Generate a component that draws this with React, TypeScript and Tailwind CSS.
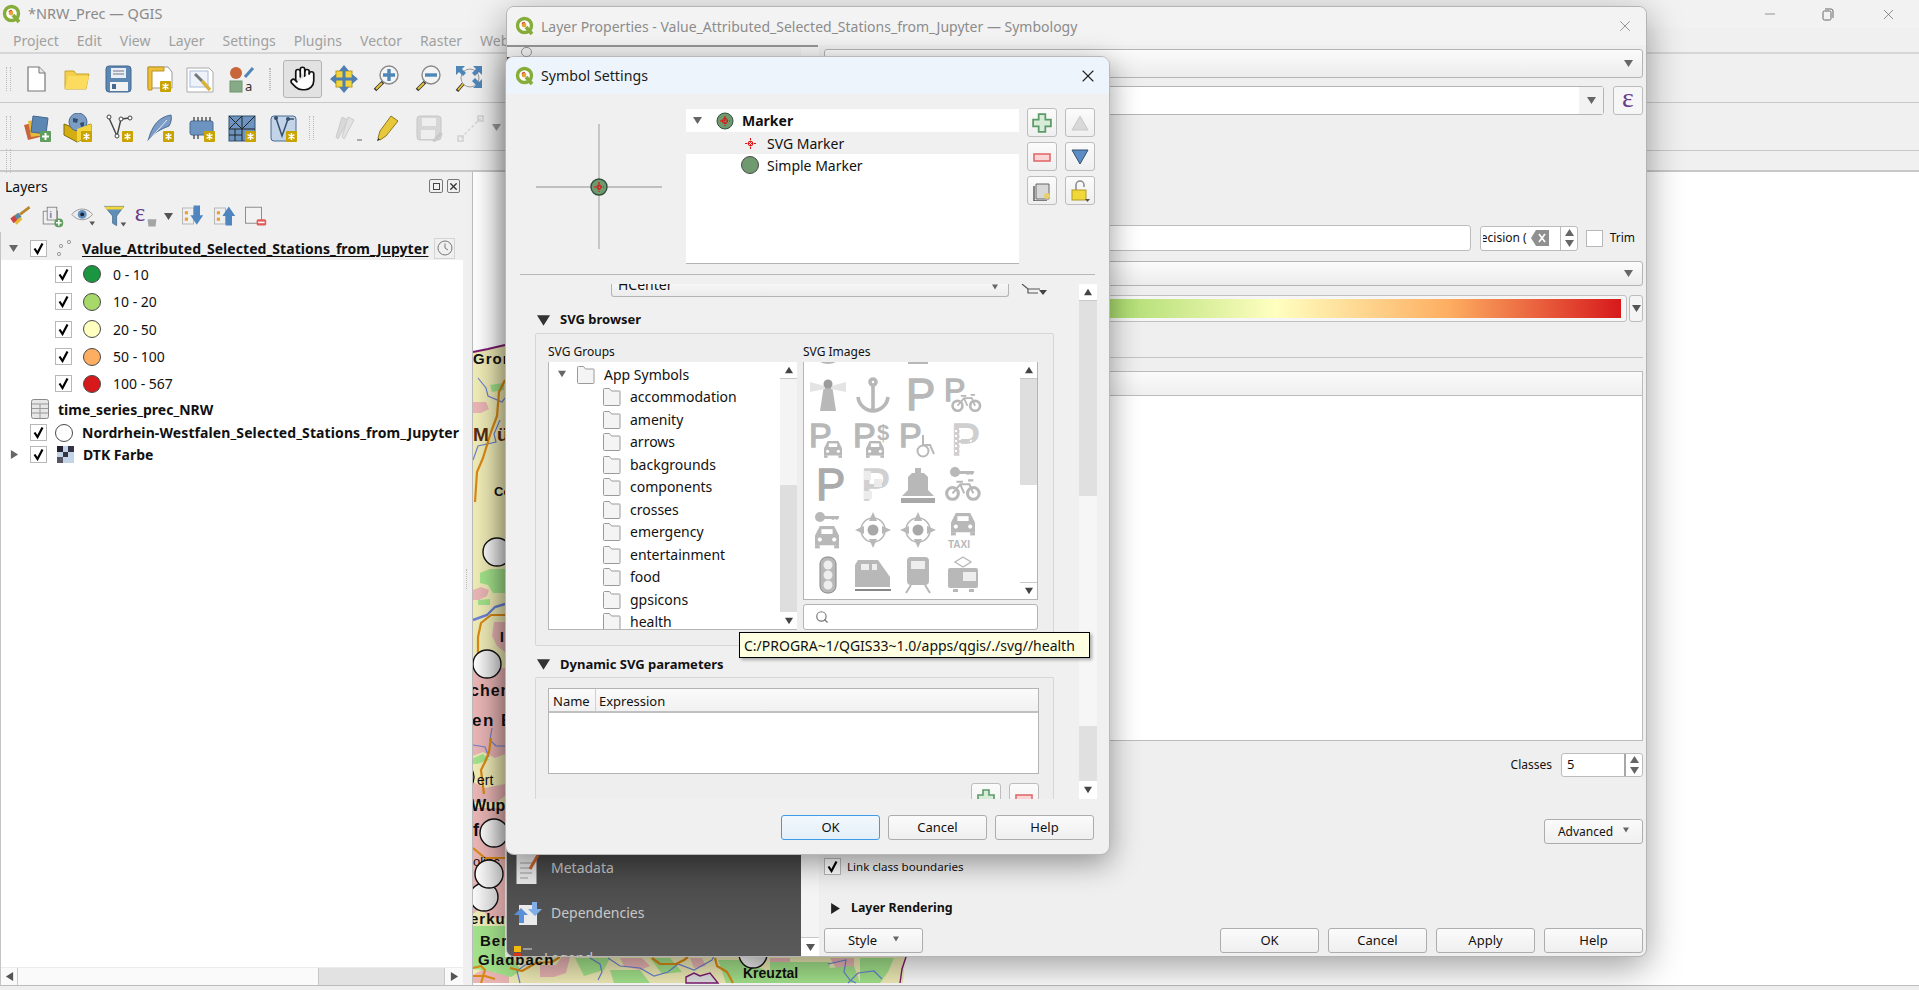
import React from "react";
import { Hand, X, Minus, Search } from "lucide-react";

const ink = "#b8b8b8";

const Tri: React.FC<{ dir?: "up" | "down" | "left" | "right"; size?: number; color?: string }> = ({
  dir = "down",
  size = 9,
  color = "#555",
}) => {
  const pts = { up: "0,9 5,1 10,9", down: "0,1 10,1 5,9", left: "9,0 9,10 1,5", right: "1,0 1,10 9,5" }[dir];
  return (
    <svg width={size} height={size} viewBox="0 0 10 10" className="shrink-0">
      <polygon points={pts} fill={color} />
    </svg>
  );
};

const Logo: React.FC<{ size?: number; faded?: boolean }> = ({ size = 20, faded }) => (
  <svg width={size} height={size} viewBox="0 0 20 20" className={faded ? "shrink-0 opacity-80" : "shrink-0"}>
    <circle cx="9.5" cy="9.5" r="7" fill="#fff" stroke="#86ac3a" strokeWidth="3.4" />
    <path d="M11 11 L17 18" stroke="#86ac3a" strokeWidth="3.6" />
    <circle cx="9" cy="9" r="2.4" fill="#e8a23c" />
    <path d="M7 8 a2.5 2.5 0 0 1 3-1.5" stroke="#d8533a" strokeWidth="1.2" fill="none" />
  </svg>
);

const Badge: React.FC<{ x: number; y: number }> = ({ x, y }) => (
  <g transform={`translate(${x} ${y})`}>
    <rect width="11" height="11" rx="1" fill="#c9a400" />
    <path d="M5.5 2v7M2.5 3.5l6 4M8.5 3.5l-6 4" stroke="#fff" strokeWidth="1.5" />
  </g>
);

const Ic: React.FC<{ children: React.ReactNode; size?: number; className?: string }> = ({ children, size = 30, className }) => (
  <svg width={size} height={size} viewBox="0 0 30 30" className={className ?? "shrink-0"}>
    {children}
  </svg>
);

const Magnifier: React.FC<{ sign: "+" | "-" }> = ({ sign }) => (
  <Ic>
    <path d="M12 18 L4 26" stroke="#333" strokeWidth="3.6" />
    <path d="M11 19 L5 25" stroke="#e8c33a" strokeWidth="2" />
    <circle cx="18" cy="11" r="9" fill="#f4f4f4" stroke="#8a8a8a" strokeWidth="1.4" />
    <path d={sign === "+" ? "M18 5v12M12 11h12" : "M12 11h12"} stroke="#4f86b8" strokeWidth="3.4" />
  </Ic>
);

const toolbar1 = [
  <Ic key="new"><path d="M7 3h11l6 6v18H7z" fill="#fff" stroke="#777" strokeWidth="1.2" /><path d="M18 3v6h6" fill="#e8e8e8" stroke="#777" /></Ic>,
  <Ic key="open"><path d="M3 7h9l2 3h13l-3 15H3z" fill="#f3cf4b" stroke="#c9a52c" /><path d="M6 12h21l-3 13H3z" fill="#fcdc5e" /></Ic>,
  <Ic key="save"><rect x="3" y="2" width="25" height="26" rx="3" fill="#5d87b3" stroke="#44688f" /><rect x="8" y="4" width="15" height="10" fill="#e8eef4" /><path d="M10 7h11M10 10h11" stroke="#778" /><rect x="7" y="18" width="18" height="9" fill="#f2f2f2" /><rect x="9" y="20" width="4" height="5" fill="#44688f" /></Ic>,
  <Ic key="layout"><path d="M4 3h20l4 5v16H4z" fill="#fff" stroke="#999" /><path d="M4 3h16v4H8v19H4z" fill="#eebf3a" stroke="#b99420" /><Badge x="16" y="17" /></Ic>,
  <Ic key="style"><path d="M2 4h22l4 4v20H2z" fill="#fff" stroke="#aaa" /><rect x="5" y="7" width="18" height="16" fill="#eef3fb" stroke="#a9bcd8" /><path d="M10 10l4 4 3 3" stroke="#777" strokeWidth="3" /><path d="M17 17l8 9" stroke="#d8b13a" strokeWidth="3.4" /></Ic>,
  <Ic key="styleA"><circle cx="10" cy="9" r="6" fill="#c8653a" /><path d="M19 13 L27 4" stroke="#4f86b8" strokeWidth="3" /><rect x="4" y="17" width="12" height="11" fill="#86ab86" stroke="#6f946f" /><text x="19" y="27" fontSize="13" fill="#333" fontFamily="Noto Sans">a</text></Ic>,
];

const Pan = () => (
  <Ic>
    <rect x="7" y="7" width="16" height="16" fill="#f2d43d" stroke="#b99b20" />
    <path d="M15 1l5 6h-10zM15 29l5-6h-10zM1 15l6-5v10zM29 15l-6-5v10z" fill="#4f7fb0" />
    <path d="M15 6v18M6 15h18" stroke="#4f7fb0" strokeWidth="3" />
  </Ic>
);

const ZoomFull = () => (
  <Ic>
    <circle cx="16" cy="14" r="9" fill="#ececec" stroke="#999" />
    <path d="M2 2h9l-3 3 4 4-3 3-4-4-3 3zM28 2h-9l3 3-4 4 3 3 4-4 3 3zM28 24h-9l3-3-4-4 3-3 4 4 3-3z" fill="#4f86b8" />
    <path d="M9 20L3 27" stroke="#333" strokeWidth="3.4" />
    <path d="M9 20L4 26" stroke="#e8c33a" strokeWidth="1.8" />
  </Ic>
);

const toolbar2 = [
  <Ic key="add"><path d="M2 12l12-3 4 15-12 3z" fill="#c8653a" /><path d="M6 8l13-2 3 16-13 2z" fill="#e8b93a" /><path d="M11 3l15 2-2 16-15-2z" fill="#5d87b3" stroke="#44688f" /><rect x="18" y="18" width="11" height="11" rx="1" fill="#5f9e5f" /><path d="M23.5 20v7M20 23.5h7" stroke="#fff" strokeWidth="2" /></Ic>,
  <Ic key="gpkg"><path d="M1 11l13 5 14-5v11l-14 7-13-7z" fill="#d4ae10" stroke="#7d6b12" /><circle cx="15" cy="9" r="9" fill="#7d9cc4" stroke="#4a6a94" /><path d="M10 5l5 1-1 4-4-1zM17 10l4-1 0 4-3 1z" fill="#33506f" /><path d="M14 16l14-5v11l-14 7z" fill="#f2d43d" /><Badge x="18" y="18" /></Ic>,
  <Ic key="vec"><path d="M5 5l8 18 4-17 9-1" fill="none" stroke="#444" strokeWidth="1.4" /><circle cx="5" cy="4" r="2" fill="#fff" stroke="#444" /><circle cx="13" cy="23" r="2" fill="#fff" stroke="#444" /><circle cx="17" cy="6" r="2" fill="#fff" stroke="#444" /><circle cx="26" cy="5" r="2" fill="#fff" stroke="#444" /><Badge x="18" y="18" /></Ic>,
  <Ic key="feather"><path d="M26 2C14 4 7 12 3 28 8 20 16 16 24 13 26 10 27 5 26 2z" fill="#7a9cc6" stroke="#4a6a94" /><path d="M3 28L22 7" stroke="#e8eef4" /><Badge x="18" y="18" /></Ic>,
  <Ic key="chip"><rect x="4" y="8" width="23" height="14" rx="2" fill="#6d94c0" stroke="#4a6a94" /><path d="M8 4v4M12 4v4M16 4v4M20 4v4M24 4v4M8 22v4M12 22v4" stroke="#333" strokeWidth="1.2" /><Badge x="18" y="18" /></Ic>,
  <Ic key="mesh"><rect x="2" y="3" width="26" height="25" fill="#6d94c0" stroke="#33506f" /><path d="M2 3l13 13M15 3L2 16M2 16h26M15 3v25M2 22h13M8 16v12M15 16L28 3" stroke="#222" /><Badge x="18" y="18" /></Ic>,
  <Ic key="vt"><rect x="3" y="3" width="25" height="25" rx="3" fill="#c3d3e8" stroke="#4a6a94" /><path d="M8 5l6 18 6-17h6" fill="none" stroke="#33506f" strokeWidth="1.5" /><circle cx="8" cy="5" r="2" fill="#33506f" /><circle cx="20" cy="6" r="2" fill="#33506f" /><Badge x="18" y="18" /></Ic>,
];

const toolbar2b = [
  <Ic key="pens"><path d="M6 26l-2-2 6-20 6 3z" fill="#d8d8d8" stroke="#ccc" /><path d="M12 26l-2-2 6-20 6 3z" fill="#e2e2e2" stroke="#ccc" /><path d="M25 27h5" stroke="#aaa" strokeWidth="2" /></Ic>,
  <Ic key="pen"><path d="M7 27l-2-2 2-7L18 3l7 5L13 23z" fill="#e8c83a" stroke="#8a7a20" /><path d="M5 25l2 2-3 1z" fill="#333" /></Ic>,
  <Ic key="saveg"><rect x="3" y="3" width="24" height="24" rx="3" fill="#d6d6d6" stroke="#c6c6c6" /><rect x="8" y="5" width="14" height="8" fill="#eee" /><rect x="7" y="17" width="14" height="9" fill="#eee" /><path d="M18 28l8-9 3 2-8 8z" fill="#c8c8c8" /></Ic>,
  <Ic key="line"><path d="M6 25L26 5" stroke="#d4d4d4" strokeDasharray="3 2" strokeWidth="1.4" /><rect x="3" y="23" width="5" height="5" fill="none" stroke="#d0d0d0" strokeWidth="1.5" /><rect x="23" y="3" width="5" height="5" fill="none" stroke="#d0d0d0" strokeWidth="1.5" /></Ic>,
];

const layerTools = [
  <Ic key="brush" size={24}><path d="M3 18l9-7 6 8-7 7z" fill="#e8b93a" /><path d="M3 18l5-4 4 5-5 5z" fill="#c44" /><path d="M8 15l5-4 4 5-6 3z" fill="#58a" /><path d="M15 13l12-9" stroke="#b8862e" strokeWidth="3.4" /></Ic>,
  <Ic key="group" size={24}><rect x="4" y="9" width="18" height="16" fill="#f0f0f0" stroke="#777" /><rect x="9" y="4" width="12" height="16" fill="#eee" stroke="#777" /><text x="12" y="17" fontSize="10" fontWeight="700" fill="#4f7fb0">i</text><rect x="18" y="18" width="11" height="11" rx="5" fill="#5f9e5f" /><path d="M23.5 20v7M20 23.5h7" stroke="#fff" strokeWidth="2" /></Ic>,
  <Ic key="eye" size={24}><path d="M1 13c7-9 19-9 26 0-7 9-19 9-26 0z" fill="#ececec" stroke="#888" /><circle cx="14" cy="13" r="5.5" fill="#5f8fc0" /><circle cx="14" cy="13" r="2.4" fill="#223" /><polygon points="23,22 30,22 26.5,27" fill="#555" /></Ic>,
  <Ic key="filter" size={24}><path d="M2 3h24l-9 12v12l-5-3v-9z" fill="#5f8fb8" stroke="#44688f" /><path d="M2 3h24l-2 4H4z" fill="#f2d43d" /><polygon points="22,23 29,23 25.5,28" fill="#555" /></Ic>,
  <Ic key="expr" size={24}><text x="1" y="21" fontSize="31" fill="#6a3d8a" fontFamily="Liberation Serif">ε</text><path d="M17 19h11l-1 9h-9z" fill="#a5a5a5" /></Ic>,
  <Ic key="exp" size={24}><rect x="3" y="5" width="14" height="20" fill="#f0f0f0" stroke="#aaa" /><rect x="6" y="9" width="4" height="4" fill="#e8a23c" /><rect x="6" y="17" width="4" height="4" fill="#e8a23c" /><path d="M17 2h8v12h4L21 26 13 14h4z" fill="#4f86c0" /></Ic>,
  <Ic key="col" size={24}><rect x="3" y="5" width="14" height="20" fill="#f0f0f0" stroke="#aaa" /><rect x="6" y="9" width="4" height="4" fill="#e8a23c" /><rect x="6" y="17" width="4" height="4" fill="#e8a23c" /><path d="M17 27h8V15h4L21 3 13 15h4z" fill="#4f86c0" /></Ic>,
  <Ic key="rem" size={24}><rect x="3" y="4" width="20" height="20" fill="#f2f2f2" stroke="#777" /><rect x="17" y="19" width="12" height="8" rx="2" fill="#e25b5b" /><path d="M19 23h8" stroke="#fff" strokeWidth="2" /></Ic>,
];

const Check: React.FC<{ checked?: boolean }> = ({ checked = true }) => (
  <span className="w-[17px] h-[17px] shrink-0 bg-white border border-[#b8b8b8] flex items-center justify-center">
    {checked && (
      <svg width="13" height="13" viewBox="0 0 13 13">
        <path d="M2.5 6.5 L5.5 11 L10.5 1.5" fill="none" stroke="#000" strokeWidth="2.2" />
      </svg>
    )}
  </span>
);

const Dot: React.FC<{ color: string; size?: number }> = ({ color, size = 18 }) => (
  <span className="rounded-full border border-[#4a4a4a] shrink-0 block" style={{ background: color, width: size, height: size }} />
);

const legend = [
  { label: "0 - 10", color: "#1a9641", top: "h-[28px]" },
  { label: "10 - 20", color: "#a6d96a", top: "h-[27px]" },
  { label: "20 - 50", color: "#ffffc0", top: "h-[28px]" },
  { label: "50 - 100", color: "#fdae61", top: "h-[27px]" },
  { label: "100 - 567", color: "#d7191c", top: "h-[27px]" },
];

const LayersPanel = () => (
  <div className="w-[463px] shrink-0 flex flex-col">
    <div className="h-[28px] flex items-center pl-[5px] pr-[2px] text-[14px] text-[#111]">
      <span className="flex-1">Layers</span>
      <span className="w-[14px] h-[14px] border border-[#777] rounded-[2px] mr-[4px] flex items-center justify-center">
        <span className="w-[7px] h-[7px] border border-[#444]" />
      </span>
      <span className="w-[13px] h-[14px] border border-[#777] rounded-[2px] mr-[1px] flex items-center justify-center">
        <X size={11} strokeWidth={3} color="#333" />
      </span>
    </div>
    <div className="h-[32px] flex items-center pl-[8px]">
      {layerTools.map((t, i) => (
        <span key={i} className={i === 4 ? "w-[46px] flex items-center gap-[6px]" : "w-[31.5px]"}>
          {t}
          {i === 4 && <Tri size={9} />}
        </span>
      ))}
    </div>
    <div className="flex-1 bg-white border-l border-[#c4c4c4] flex flex-col min-h-0 text-[14px] text-[#111]">
      <div className="h-[28px] bg-[#f0f0f0] flex items-center pl-[8px] pt-[4px]">
        <Tri size={9} color="#666" />
        <span className="w-[4px]" />
        <span className="ml-[8px]"><Check /></span>
        <svg width="18" height="18" viewBox="0 0 18 18" className="ml-[9px]">
          <circle cx="3" cy="15" r="1.6" fill="none" stroke="#999" />
          <circle cx="5" cy="7" r="1.6" fill="none" stroke="#999" />
          <circle cx="13" cy="3" r="1.6" fill="none" stroke="#999" />
        </svg>
        <span className="ml-[8px] font-bold underline underline-offset-2 whitespace-nowrap tracking-[0.06px]">Value_Attributed_Selected_Stations_from_Jupyter</span>
        <span className="ml-[6px] w-[21px] h-[21px] border border-[#d4d4d4] flex items-center justify-center">
          <svg width="16" height="16" viewBox="0 0 16 16"><circle cx="8" cy="8" r="7" fill="none" stroke="#777" /><path d="M8 3.5V8l3 2" fill="none" stroke="#777" /></svg>
        </span>
      </div>
      {legend.map((l) => (
        <div key={l.label} className={`${l.top} flex items-center pl-[54px]`}>
          <Check />
          <span className="ml-[11px]"><Dot color={l.color} /></span>
          <span className="ml-[12px]">{l.label}</span>
        </div>
      ))}
      <div className="h-[24px] flex items-center pl-[30px]">
        <svg width="18" height="20" viewBox="0 0 18 20">
          <rect x="0.5" y="0.5" width="17" height="19" rx="2" fill="#e6e6e6" stroke="#888" />
          <path d="M1 5h16M1 9.5h16M1 14h16M9 5v14" stroke="#999" />
        </svg>
        <span className="ml-[9px] font-bold">time_series_prec_NRW</span>
      </div>
      <div className="h-[23px] flex items-center pl-[29px]">
        <Check />
        <span className="ml-[8px]"><Dot color="#fff" /></span>
        <span className="ml-[9px] font-bold whitespace-nowrap tracking-[0.1px]">Nordrhein-Westfalen_Selected_Stations_from_Jupyter</span>
      </div>
      <div className="h-[21px] flex items-center pl-[9px]">
        <Tri dir="right" size={9} color="#666" />
        <span className="ml-[11px]"><Check /></span>
        <svg width="17" height="17" viewBox="0 0 3 3" className="ml-[10px]" shapeRendering="crispEdges">
          <rect width="3" height="3" fill="#c4d4e8" />
          <rect width="1" height="1" fill="#223" />
          <rect x="2" width="1" height="1" fill="#334" />
          <rect x="1" y="1" width="1" height="1" fill="#334" />
          <rect y="2" width="1" height="1" fill="#556" />
        </svg>
        <span className="ml-[9px] font-bold">DTK Farbe</span>
      </div>
      <div className="flex-1" />
      <div className="h-[18px] border-t border-[#ececec] bg-[#fafafa] flex items-center">
        <span className="w-[17px] h-full border-r border-[#ccc] flex items-center justify-center"><Tri dir="left" color="#555" /></span>
        <span className="w-[300px]" />
        <span className="w-[127px] h-full bg-[#e2e2e2] border-x border-[#c8c8c8]" />
        <span className="flex-1 flex items-center justify-center"><Tri dir="right" color="#555" /></span>
      </div>
    </div>
  </div>
);

const Stn: React.FC<{ cx: number; cy: number }> = ({ cx, cy }) => (
  <circle cx={cx} cy={cy} r="14" fill="url(#stn)" stroke="#111" strokeWidth="1.4" />
);

const MapCanvas = () => (
  <svg viewBox="472 172 1447 813" width="1447" height="813" className="block bg-white">
    <defs>
      <linearGradient id="stn" x1="0" x2="1">
        <stop offset="0" stopColor="#ffffff" />
        <stop offset="1" stopColor="#dcdcdc" />
      </linearGradient>
    </defs>
    <path d="M473 352 L488 349 L505 345 V957 H905 L903 983 H473 Z" fill="#f1edb8" />
    <path d="M473 352 L488 349 L505 345" fill="none" stroke="#7d1a70" strokeWidth="2" />
    <g fill="#ebb6b6">
      <path d="M473 402 h13 l3 7 -8 4 h-8z" />
      <path d="M473 590 l8 -3 8 3 -2 6 -8 4 h-6z" />
      <path d="M494 622 h11 v30 l-8 -6 -5 -10z" />
      <path d="M473 668 h32 v86 l-10 4 -12 -6 -10 4z" />
      <path d="M473 782 l12 6 20 -4 v12 l-8 6 h-24z" />
      <path d="M473 808 h32 v110 h-16 l-8 -10 -8 6z" />
      <path d="M473 975 l14 -8 8 6 h14 v10 h-36z" />
      <path d="M540 965 h16 l6 -8 8 0 -4 16 -12 4 h-14z" />
      <path d="M620 958 h22 l8 8 -10 4 -16 -4z" />
      <path d="M690 958 h12 l4 8 -12 2z" />
      <path d="M770 958 h20 v4 h-20z" />
      <path d="M830 958 h24 v10 h-18z" />
    </g>
    <g fill="#a4e48c">
      <path d="M490 385 l14 -2 v7 l-12 2z" />
      <path d="M480 573 l10 -4 h15 v24 h-12 l-5 -8 -8 -2z" />
      <path d="M478 600 l12 -1 v6 h-12z" />
      <path d="M473 758 l10 -4 6 6 -12 4 h-4z" />
      <path d="M473 926 h32 v31 h-32z" />
      <path d="M473 957 h40 l8 14 -10 6 -22 -6 -16 -2z" />
      <path d="M575 958 h35 l-6 12 -20 6z" />
      <path d="M610 970 h30 l10 13 h-36z" />
      <path d="M650 958 h20 l12 14 -20 2z" />
      <path d="M718 960 h22 l30 12 v11 h-44z" />
      <path d="M770 962 h60 l-2 21 h-58z" />
      <path d="M828 968 l26 -2 6 17 h-32z" />
      <path d="M860 958 h34 l-6 14 -8 11 h-20z" />
    </g>
    <path d="M686 983 v-6 l8 -4 6 3 10 -3 8 10z" fill="#e2e2e2" stroke="#7d1a70" strokeWidth="1.4" />
    <path d="M906 957 l-4 12 -2 14" fill="none" stroke="#7d1a70" strokeWidth="1.4" />
    <g fill="none" stroke="#6b82d4" strokeWidth="1.2">
      <path d="M478 378 l8 10 2 8 14 6 3 -4" />
      <path d="M500 420 l-6 14 2 8 -18 4 -5 14" />
      <path d="M473 620 l14 -5 8 -8 10 -3" strokeWidth="2.4" />
      <path d="M492 728 l-2 12 6 6 9 0" />
      <path d="M473 745 l12 2 4 10" />
      <path d="M520 983 l-3 -12 8 -6 16 -3" />
      <path d="M590 958 l10 6 2 8 -4 8" />
      <path d="M608 958 l12 8 20 2 14 8 14 -4 10 -8 16 6 18 -10 2 -4" />
      <path d="M828 964 l18 -4 -2 12 6 8 6 3" />
      <path d="M848 983 l10 -10 16 -2 8 8" />
    </g>
    <g fill="none" stroke="#dc8a14" strokeWidth="2.2" strokeLinejoin="round">
      <path d="M505 380 l-6 12 -2 24 -6 16 -8 26 -6 14 -2 30" />
      <path d="M505 615 h-14 l-10 8 -3 14 0 16" />
      <path d="M491 738 l-2 14 -4 10 -4 8 3 24" />
      <path d="M473 848 l12 10 20 0" />
      <path d="M473 968 l8 -2 4 4 -4 13" />
      <path d="M473 976 l12 0 10 3" />
      <path d="M510 968 l12 3 14 -8 16 -1 8 -5" />
      <path d="M652 958 l8 6 16 0 8 -4 4 -3" />
      <path d="M715 958 l2 8 10 6 6 11" />
    </g>
    <g fontFamily="Liberation Sans" fontWeight="700" fill="#111" fontSize="15">
      <text x="473" y="364" letterSpacing="1">Gron</text>
      <text x="473" y="441" fontSize="19" fill="#5a2b10" letterSpacing="1.5">M ü</text>
      <text x="494" y="496" fontSize="13">Co</text>
      <text x="500" y="642" fontSize="14">I</text>
      <text x="470" y="696" fontSize="16" letterSpacing="1">chen</text>
      <text x="472" y="726" fontSize="17" letterSpacing="1.5">en E</text>
      <text x="477" y="785" fontSize="14" fontWeight="400">ert</text>
      <text x="471" y="811" fontSize="16">Wup</text>
      <text x="473" y="836" fontSize="18">f</text>
      <text x="473" y="866" fontSize="13" fontWeight="400">olinc</text>
      <text x="470" y="924" fontSize="15" letterSpacing="1">erkus</text>
      <text x="480" y="946" fontSize="15" letterSpacing="1">Ber</text>
      <text x="478" y="965" fontSize="15" letterSpacing="1">Gladbach</text>
      <text x="743" y="978" fontSize="14">Kreuztal</text>
    </g>
    <Stn cx={497} cy={552} />
    <Stn cx={487} cy={664} />
    <Stn cx={460} cy={777} />
    <Stn cx={494} cy={833} />
    <Stn cx={484} cy={897} />
    <Stn cx={489} cy={874} />
    <Stn cx={753} cy={954} />
    <rect x="472" y="172" width="1" height="813" fill="#bdbdbd" />
  </svg>
);

const QButton: React.FC<{ children: React.ReactNode; className?: string; primary?: boolean }> = ({ children, className, primary }) => (
  <div
    className={`h-[25px] rounded-[3px] border flex items-center justify-center text-[13px] text-[#111] ${
      primary ? "border-[#3d9be8] bg-linear-to-b from-[#f2f8fd] to-[#e4eff8]" : "border-[#adadad] bg-linear-to-b from-[#fbfbfb] to-[#efefef]"
    } ${className ?? "w-[99px]"}`}
  >
    {children}
  </div>
);

const Combo: React.FC<{ className?: string }> = ({ className }) => (
  <div className={`rounded-[3px] border border-[#b4b4b4] bg-linear-to-b from-[#fbfbfb] to-[#ececec] flex items-center justify-end pr-[9px] ${className ?? ""}`}>
    <Tri size={9} color="#666" />
  </div>
);

const LayerProperties = () => (
  <div className="absolute left-[506px] top-[6px] w-[1141px] h-[951px] rounded-[8px] border border-[#b4b4b4] bg-[#efefef] shadow-[0_10px_36px_rgba(0,0,0,0.38)] overflow-hidden flex flex-col">
    <div className="h-[38px] shrink-0 bg-[#f3f3f3] flex items-center pl-[8px] text-[14px] text-[#8c8c8c]">
      <Logo />
      <span className="ml-[6px] flex-1 whitespace-nowrap">Layer Properties - Value_Attributed_Selected_Stations_from_Jupyter — Symbology</span>
      <X size={18} strokeWidth={1} color="#777" className="mr-[12px]" />
    </div>
    <div className="flex-1 flex min-h-0">
      <div className="w-[294px] shrink-0 flex flex-col bg-[#efefef]">
        <div className="h-[12px] mr-[-17px] border-t-2 border-[#8e8e8e] pl-[14px] z-10">
          <span className="block w-[11px] h-[10px] border border-[#888] rounded-full" />
        </div>
        <div className="flex-1 bg-[#545454] pt-[789px] overflow-hidden">
          <div className="bg-linear-to-b from-[#464646] to-[#5b5b5b] h-[112px] text-[#c8c8c8] text-[14px] overflow-hidden">
            <div className="h-[45px] flex items-center pl-[9px]">
              <svg width="24" height="32" viewBox="0 0 24 32"><rect x="0.5" y="1" width="20" height="30" fill="#e6e6e6" /><path d="M4 10h12M4 15h12M4 20h12M4 25h8" stroke="#999" /><path d="M14 16 L22 2" stroke="#c8602e" strokeWidth="3" /></svg>
              <span className="ml-[11px] -mt-[2px]">Metadata</span>
            </div>
            <div className="h-[45px] flex items-center pl-[6px]">
              <svg width="30" height="30" viewBox="0 0 30 30"><rect x="6" y="6" width="18" height="20" fill="#eaeaea" /><path d="M1 16l7-7 7 7h-4v8H6v-8z" fill="#5a90d8" /><path d="M29 10l-7 7-7-7h4V3h5v7z" fill="#80aee6" /></svg>
              <span className="ml-[8px] -mt-[2px]">Dependencies</span>
            </div>
            <div className="h-[22px] flex pl-[7px] pt-[10px]">
              <svg width="20" height="11" viewBox="0 0 20 11" className="shrink-0"><rect x="0" y="0" width="7" height="6" fill="#f2b90c" /><rect x="0" y="7" width="7" height="4" fill="#d9331c" /><path d="M9 3h9" stroke="#999" strokeWidth="2" /></svg>
              <span className="ml-[10px] leading-[24px]">Legend</span>
            </div>
          </div>
        </div>
      </div>
      <div className="w-[18px] shrink-0 bg-[#f4f4f4] flex flex-col justify-end">
        <div className="h-[19px] border-t border-[#c8c8c8] bg-white flex items-center justify-center"><Tri color="#555" /></div>
      </div>
      <div className="flex-1 flex flex-col pl-[5px] pr-[3px] text-[13px] text-[#111]">
        <Combo className="h-[29px] mt-[4px] shrink-0" />
        <div className="h-[29px] mt-[8px] flex shrink-0">
          <div className="flex-1 rounded-[3px] border border-[#b4b4b4] bg-white flex justify-end">
            <div className="w-[24px] bg-[#f2f2f2] flex items-center justify-center"><Tri color="#666" /></div>
          </div>
          <div className="w-[30px] ml-[9px] rounded-[3px] border border-[#bcbcbc] bg-[#f6f6f6] flex items-center justify-center text-[28px] leading-none pb-[5px] text-[#6a3d8a] font-['Liberation_Serif']">ε</div>
        </div>
        <div className="h-[26px] mt-[110px] flex items-center shrink-0">
          <div className="flex-1 h-full rounded-[3px] border border-[#bcbcbc] bg-white" />
          <div className="w-[98px] h-[25px] ml-[9px] rounded-[3px] border border-[#bcbcbc] bg-white flex items-center overflow-hidden">
            <span className="w-[44px] ml-[2px] overflow-hidden whitespace-nowrap flex justify-end text-[12px]">ecision (</span>
            <svg width="18" height="16" viewBox="0 0 18 16" className="ml-[4px] shrink-0"><path d="M5 0h13v16H5L0 8z" fill="#909090" /><path d="M8 4l6 8M14 4l-6 8" stroke="#fff" strokeWidth="1.6" /></svg>
            <span className="ml-[11px] h-full border-l border-[#bcbcbc] pl-[4px] flex flex-col justify-center gap-[2px]"><Tri dir="up" size={9} color="#666" /><Tri size={9} color="#666" /></span>
          </div>
          <span className="ml-[8px]"><Check checked={false} /></span>
          <span className="ml-[7px] text-[12px]">Trim</span>
          <span className="w-[8px]" />
        </div>
        <Combo className="h-[25px] mt-[10px] shrink-0" />
        <div className="h-[27px] mt-[9px] flex shrink-0">
          <div className="ml-[100px] flex-1 rounded-[3px] border border-[#c0c0c0] bg-[#f6f6f6] px-[5px] py-[3px]">
            <div className="h-full" style={{ backgroundImage: "linear-gradient(to right,#1a9641 0%,#a6d96a 25%,#ffffc0 50%,#fdae61 75%,#d7191c 100%)" }} />
          </div>
          <div className="w-[14px] ml-[2px] rounded-[3px] border border-[#bcbcbc] bg-[#f4f4f4] flex items-center justify-center"><Tri color="#555" /></div>
        </div>
        <div className="h-px mt-[35px] bg-[#c4c4c4] shrink-0" />
        <div className="h-[370px] mt-[13px] border border-[#bcbcbc] bg-white shrink-0">
          <div className="h-[24px] border-b border-[#bcbcbc] bg-linear-to-b from-[#fbfbfb] to-[#efefef]" />
        </div>
        <div className="h-[24px] mt-[12px] flex items-center justify-end shrink-0">
          <span className="mr-[9px] text-[12px]">Classes</span>
          <div className="w-[82px] h-full rounded-[3px] border border-[#bcbcbc] bg-white flex items-center pl-[5px]">
            <span className="flex-1">5</span>
            <span className="w-[18px] h-full border-l-2 border-[#a8a8a8] flex flex-col items-center justify-center gap-[2px]"><Tri dir="up" size={9} color="#666" /><Tri size={9} color="#666" /></span>
          </div>
        </div>
        <div className="mt-[42px] flex justify-end shrink-0">
          <QButton className="w-[99px]">
            <span className="mr-[10px] text-[12px]">Advanced</span>
            <span className="-mt-[4px]"><Tri size={6} color="#666" /></span>
          </QButton>
        </div>
        <div className="mt-[15px] h-[15px] flex items-center shrink-0">
          <Check />
          <span className="ml-[6px] text-[11.6px]">Link class boundaries</span>
        </div>
        <div className="mt-[26px] h-[16px] flex items-center pl-[6px] shrink-0">
          <Tri dir="right" size={11} color="#222" />
          <span className="ml-[10px] font-bold text-[12.4px]">Layer Rendering</span>
        </div>
        <div className="mt-[12px] flex justify-between shrink-0">
          <QButton>
            <span className="mr-[16px]">Style</span>
            <span className="-mt-[4px]"><Tri size={6} color="#666" /></span>
          </QButton>
          <div className="flex gap-[9px]">
            <QButton>OK</QButton>
            <QButton>Cancel</QButton>
            <QButton>Apply</QButton>
            <QButton>Help</QButton>
          </div>
        </div>
      </div>
    </div>
  </div>
);

const Folder = () => (
  <svg width="18" height="19" viewBox="0 0 18 19" className="shrink-0">
    <path d="M0.5 2.5a1 1 0 0 1 1-1h5l2 2.5h8a.5.5 0 0 1 .5.5v13a1 1 0 0 1-1 1h-14.5a1 1 0 0 1-1-1z" fill="#f4f4f4" stroke="#9a9a9a" />
  </svg>
);

const groups = ["accommodation", "amenity", "arrows", "backgrounds", "components", "crosses", "emergency", "entertainment", "food", "gpsicons", "health"];

const PSign: React.FC<{ x?: number; y?: number; s?: number; fill?: string }> = ({ x = 6, y = 33, s = 44, fill = ink }) => (
  <text x={x} y={y} fontSize={s} fontFamily="Liberation Sans" fill={fill} stroke={fill} strokeWidth="1.3">P</text>
);

const Car: React.FC<{ x?: number; y?: number; k?: number }> = ({ x = 14, y = 22, k = 1.2 }) => (
  <g transform={`translate(${x} ${y}) scale(${k})`} fill={ink}>
    <path d="M3 0h9l3 6v6H0V6z" />
    <rect x="0" y="12" width="3" height="2" />
    <rect x="12" y="12" width="3" height="2" />
    <rect x="4" y="2" width="7" height="3" fill="#fff" />
    <circle cx="3" cy="8.5" r="1.3" fill="#fff" />
    <circle cx="12" cy="8.5" r="1.3" fill="#fff" />
  </g>
);

const Bike: React.FC<{ x?: number; y?: number; k?: number }> = ({ x = 10, y = 22, k = 1 }) => (
  <g transform={`translate(${x} ${y}) scale(${k})`} fill="none" stroke={ink} strokeWidth="2.4">
    <circle cx="5" cy="8" r="4.5" />
    <circle cx="21" cy="8" r="4.5" />
    <path d="M5 8l6-7h7l3 7M11 1l3 7M8 -1h5M17 -2h4" strokeWidth="1.6" />
  </g>
);

const Key: React.FC<{ x?: number; y?: number }> = ({ x = 8, y = 3 }) => (
  <g transform={`translate(${x} ${y})`} fill={ink}>
    <circle cx="5" cy="5" r="5" />
    <path d="M9 4h15v2l-2 2-2-1-2 1-2-1H9z" />
  </g>
);

const Roundabout = () => (
  <g fill={ink}>
    <circle cx="18" cy="18" r="5.5" fill="#a8a8a8" />
    <circle cx="18" cy="18" r="12" fill="none" stroke={ink} strokeWidth="1.6" />
    <path d="M18 0l4 9h-8zM18 36l4-9h-8zM0 18l9-4v8zM36 18l-9-4v8z" />
  </g>
);

const svgIcons = [
  <g key="l"><path d="M14 8h8l4 26H10z" fill={ink} /><path d="M0 5l15 4v3L0 15zM36 5L21 9v3l15 3z" fill="#e4e4e4" /><circle cx="18" cy="7" r="4.5" fill="#9c9c9c" /></g>,
  <g key="a" fill="none" stroke={ink} strokeWidth="3.6"><circle cx="18" cy="5" r="3" /><path d="M18 8v26M3 20c1 9 9 14 15 14s14-5 15-14" /></g>,
  <PSign key="p1" />,
  <g key="p2"><PSign x={-1} y={24} s={32} /><Bike x={7} y={20} k={1.1} /></g>,
  <g key="p3"><PSign x={-1} y={25} s={34} /><Car x={14} y={19} /></g>,
  <g key="p4"><PSign x={-2} y={25} s={34} /><text x="22" y="18" fontSize="22" fontWeight="700" fontFamily="Liberation Sans" fill={ink}>$</text><Car x={11} y={19} /></g>,
  <g key="p5"><PSign x={-1} y={25} s={34} /><g fill="none" stroke={ink} strokeWidth="2"><circle cx="23" cy="29" r="5.5" /><path d="M23 13v10h7l4 9" /></g></g>,
  <g key="p6"><PSign fill="#cfcfcf" /><path d="M11 8v24M15 6v26M21 9l6 12" stroke="#fff" strokeDasharray="2 3" strokeWidth="2" /></g>,
  <PSign key="p7" fill="#ababab" />,
  <g key="p8"><PSign fill="#d0d0d0" /><path d="M9 4h7v9H9zM19 12h8v8h-8zM9 24h8v8H9z" fill="#ececec" /></g>,
  <g key="s" fill={ink}><path d="M15 1h6v5h3l4 4v13l6 6H2l6-6V10l4-4h3z" /><path d="M1 31h34v5H1z" fill="#a8a8a8" /></g>,
  <g key="kb"><Key x={5} y={0} /><Bike x={1} y={16} k={1.3} /></g>,
  <g key="kc"><Key x={5} y={0} /><Car x={5} y={14} k={1.6} /></g>,
  <Roundabout key="r1" />,
  <Roundabout key="r2" />,
  <g key="t"><Car x={6} y={1} k={1.6} /><text x="3" y="36" fontSize="10" fontWeight="700" fontFamily="Liberation Sans" fill={ink}>TAXI</text></g>,
  <g key="tl"><rect x="10" y="0" width="16" height="36" rx="7" fill={ink} stroke="#888" /><circle cx="18" cy="8" r="4.5" fill="#eee" /><circle cx="18" cy="18" r="4.5" fill="#eee" /><circle cx="18" cy="28" r="4.5" fill="#eee" /></g>,
  <g key="tr" fill={ink}><path d="M3 3h20l12 17v10H0V8z" /><path d="M6 7h8v6H6zM17 7h5v6h-5z" fill="#eee" /><path d="M0 32h36v2H0z" fill="#888" /></g>,
  <g key="tn" fill={ink}><rect x="7" y="0" width="22" height="28" rx="4" /><rect x="11" y="4" width="14" height="8" fill="#eee" /><path d="M11 28l-5 8M25 28l5 8" stroke={ink} strokeWidth="2" /></g>,
  <g key="tm" fill={ink}><path d="M18 0l8 5-8 5-8-5z" fill="none" stroke={ink} strokeWidth="1.4" /><rect x="3" y="11" width="30" height="20" rx="2" /><rect x="18" y="15" width="13" height="9" fill="#eee" /><path d="M8 32h5v3H8zM24 32h5v3h-5z" /></g>,
];

const ToolBtn: React.FC<{ children: React.ReactNode; className?: string }> = ({ children, className }) => (
  <div className={`rounded-[3px] border border-[#bdbdbd] bg-linear-to-b from-[#fbfbfb] to-[#efefef] flex items-center justify-center ${className ?? "w-[30px] h-[29px]"}`}>
    {children}
  </div>
);

const PlusIcon: React.FC<{ size?: number }> = ({ size = 18 }) => (
  <svg width={size} height={size} viewBox="0 0 18 18">
    <path d="M6 1h6v5h5v6h-5v5H6v-5H1V6h5z" fill="#d7ecd7" stroke="#5d9a6a" strokeWidth="1.6" />
  </svg>
);

const MinusIcon: React.FC<{ size?: number }> = ({ size = 18 }) => (
  <svg width={size} height={size} viewBox="0 0 18 18">
    <rect x="1" y="6" width="16" height="7" fill="#fbd5d5" stroke="#e26a6a" strokeWidth="1.6" />
  </svg>
);

const SymbolSettings = () => (
  <div className="absolute left-[505px] top-[56px] w-[605px] h-[799px] rounded-[9px] border border-[#b8b8b8] bg-[#f0f0f0] shadow-[0_8px_30px_rgba(0,0,0,0.4)] overflow-hidden flex flex-col text-[14px] text-[#111]">
    <div className="h-[37px] shrink-0 bg-[#eef4fb] flex items-center pl-[9px]">
      <Logo />
      <span className="ml-[6px] flex-1 text-[14.2px] text-[#1a1a1a]">Symbol Settings</span>
      <X size={20} strokeWidth={1.3} color="#222" className="mr-[11px]" />
    </div>
    <div className="h-[181px] shrink-0 border-b border-[#b8b8b8] mx-[14px] flex">
      <svg width="152" height="126" viewBox="0 0 152 126" className="mt-[30px] shrink-0">
        <path d="M16 63h126M79 0v125" stroke="#b0b0b0" strokeWidth="1.3" />
        <circle cx="79" cy="63" r="8" fill="#6f9a70" stroke="#33503a" strokeWidth="1.4" />
        <path d="M74 63h10M79 58v10" stroke="#e01010" strokeWidth="1.2" strokeDasharray="2 1" />
        <circle cx="79" cy="63" r="2.2" fill="none" stroke="#e01010" />
      </svg>
      <div className="w-[333px] h-[155px] mt-[15px] ml-[14px] bg-white border-b border-[#b4b4b4] shrink-0">
        <div className="h-[23px] flex items-center pl-[7px]">
          <Tri size={9} color="#666" />
          <span className="ml-[14px]">
            <svg width="18" height="18" viewBox="0 0 18 18"><circle cx="9" cy="9" r="8" fill="#6f9a70" stroke="#33503a" /><path d="M4 9h10M9 4v10" stroke="#e01010" strokeWidth="1.2" strokeDasharray="2 1" /><circle cx="9" cy="9" r="2.6" fill="none" stroke="#e01010" /></svg>
          </span>
          <span className="ml-[8px] font-bold">Marker</span>
        </div>
        <div className="h-[22px] bg-[#f0f0f0] flex items-center pl-[59px]">
          <svg width="11" height="11" viewBox="0 0 11 11"><path d="M0 5.5h11M5.5 0v11" stroke="#e01010" strokeDasharray="2 1" /><circle cx="5.5" cy="5.5" r="2.4" fill="none" stroke="#e01010" /></svg>
          <span className="ml-[11px]">SVG Marker</span>
        </div>
        <div className="h-[22px] flex items-center pl-[55px]">
          <Dot color="#6f9a70" />
          <span className="ml-[8px]">Simple Marker</span>
        </div>
      </div>
      <div className="ml-[8px] mt-[14px] grid grid-cols-2 gap-x-[8px] gap-y-[5px] h-fit">
        <ToolBtn><PlusIcon size={20} /></ToolBtn>
        <ToolBtn><svg width="18" height="16" viewBox="0 0 18 16"><polygon points="9,1 17,15 1,15" fill="#d8d8d8" stroke="#c8c8c8" /></svg></ToolBtn>
        <ToolBtn><MinusIcon size={18} /></ToolBtn>
        <ToolBtn><svg width="18" height="16" viewBox="0 0 18 16"><polygon points="1,1 17,1 9,15" fill="#5b8dc4" stroke="#33506f" /></svg></ToolBtn>
        <ToolBtn><svg width="20" height="20" viewBox="0 0 20 20"><path d="M4 3h13v15H4z" fill="#d8d8d8" stroke="#666" /><path d="M2 5v15h13" fill="none" stroke="#555" strokeWidth="1.4" /><circle cx="15" cy="15" r="3" fill="#e8d06a" /></svg></ToolBtn>
        <ToolBtn><svg width="20" height="22" viewBox="0 0 20 22"><path d="M6 10V5a4 4 0 0 1 8 0v2" fill="none" stroke="#888" strokeWidth="1.5" /><rect x="2" y="10" width="14" height="10" fill="#f0d83a" stroke="#b09a20" /><polygon points="15,19 20,19 17.5,22" fill="#555" /></svg></ToolBtn>
      </div>
    </div>
    <div className="flex mt-[9px] h-[515px] shrink-0 overflow-hidden">
      <div className="ml-[29px] w-[519px] shrink-0 flex flex-col">
        <div className="flex h-[13px] shrink-0 items-end">
          <div className="ml-[76px] w-[398px] h-full rounded-b-[3px] border border-t-0 border-[#b4b4b4] bg-linear-to-b from-[#f6f6f6] to-[#ececec] overflow-hidden flex items-center justify-between pl-[6px] pr-[10px]">
            <span className="block -mt-[12px]">HCenter</span>
            <span className="-mt-[6px]"><Tri size={6} color="#666" /></span>
          </div>
          <svg width="26" height="13" viewBox="0 0 26 13" className="ml-[12px]"><path d="M1 0l6 5h12M7 5v4h10" fill="none" stroke="#555" strokeWidth="1.2" /><polygon points="18,6 26,6 22,11" fill="#444" /></svg>
        </div>
        <div className="flex items-center mt-[16px] h-[14px] pl-[2px] shrink-0">
          <Tri size={13} color="#333" />
          <span className="ml-[10px] text-[13px] font-bold">SVG browser</span>
        </div>
        <div className="mt-[6px] h-[313px] shrink-0 rounded-[2px] border border-[#d6d6d6] bg-[#eeeeee] pl-[12px] flex">
          <div className="w-[249px] shrink-0">
            <div className="h-[28px] pt-[10px] text-[12px] leading-[16px]">SVG Groups</div>
            <div className="h-[268px] bg-white border-b border-l border-[#b4b4b4] flex">
              <div className="flex-1 overflow-hidden pt-[1px]">
                <div className="h-[22.5px] flex items-center pl-[9px]">
                  <Tri size={8} color="#666" />
                  <span className="ml-[11px]"><Folder /></span>
                  <span className="ml-[9px] whitespace-nowrap">App Symbols</span>
                </div>
                {groups.map((g) => (
                  <div key={g} className="h-[22.5px] flex items-center pl-[54px]">
                    <Folder />
                    <span className="ml-[9px]">{g}</span>
                  </div>
                ))}
              </div>
              <div className="w-[17px] shrink-0 bg-[#f4f4f4] flex flex-col">
                <div className="h-[17px] bg-white border-b border-[#c8c8c8] flex items-center justify-center"><Tri dir="up" size={8} color="#444" /></div>
                <div className="h-[106px]" />
                <div className="h-[127px] bg-[#dedede]" />
                <div className="flex-1 bg-white flex items-center justify-center"><Tri size={8} color="#444" /></div>
              </div>
            </div>
          </div>
          <div className="w-[6px] shrink-0" />
          <div className="w-[235px] shrink-0">
            <div className="h-[28px] pt-[10px] text-[12px] leading-[16px]">SVG Images</div>
            <div className="h-[238px] bg-white border-b border-x border-[#b4b4b4] flex">
              <div className="flex-1 overflow-hidden">
                <div className="ml-[1px] -mt-[34.5px] grid grid-cols-[repeat(4,45px)] auto-rows-[45px]">
                  <svg width="36" height="36" viewBox="0 0 36 36" className="m-auto"><ellipse cx="18" cy="20" rx="14" ry="12" fill={ink} /></svg>
                  <span />
                  <svg width="36" height="36" viewBox="0 0 36 36" className="m-auto"><path d="M8 10h20v22H8z" fill={ink} /></svg>
                  <span />
                  {svgIcons.map((icon, i) => (
                    <svg key={i} width="36" height="36" viewBox="0 0 36 36" className="m-auto overflow-visible">
                      {icon}
                    </svg>
                  ))}
                </div>
              </div>
              <div className="w-[17px] shrink-0 bg-white flex flex-col">
                <div className="h-[17px] border-b border-[#c8c8c8] flex items-center justify-center"><Tri dir="up" size={8} color="#444" /></div>
                <div className="h-[106px] bg-[#dedede]" />
                <div className="flex-1" />
                <div className="h-[17px] border-t border-[#c8c8c8] flex items-center justify-center"><Tri size={8} color="#444" /></div>
              </div>
            </div>
            <div className="h-[26px] mt-[4px] rounded-[3px] border border-[#b4b4b4] bg-white flex items-center pl-[11px]">
              <Search size={14} color="#777" />
            </div>
          </div>
        </div>
        <div className="flex items-center mt-[11px] h-[15px] pl-[2px] shrink-0">
          <Tri size={13} color="#333" />
          <span className="ml-[10px] text-[13px] font-bold">Dynamic SVG parameters</span>
        </div>
        <div className="mt-[5px] flex-1 rounded-t-[2px] border border-b-0 border-[#d6d6d6] bg-[#eeeeee] pl-[12px] pr-[14px] pt-[10px] overflow-hidden">
          <div className="h-[86px] border border-[#b4b4b4] bg-white">
            <div className="h-[24px] border-b-2 border-[#c0c0c0] bg-linear-to-b from-[#fbfbfb] to-[#f1f1f1] flex items-center text-[13px]">
              <span className="w-[47px] pl-[4px] pt-[3px] border-r border-[#d0d0d0] h-full flex items-center">Name</span>
              <span className="pl-[3px] pt-[3px]">Expression</span>
            </div>
          </div>
          <div className="mt-[9px] flex justify-end gap-[8px]">
            <ToolBtn className="w-[30px] h-[30px]"><PlusIcon /></ToolBtn>
            <ToolBtn className="w-[30px] h-[30px]"><MinusIcon /></ToolBtn>
          </div>
        </div>
      </div>
      <div className="ml-[25px] w-[18px] shrink-0 flex flex-col bg-[#f6f6f6]">
        <div className="h-[17px] bg-white border-b border-[#c8c8c8] flex items-center justify-center"><Tri dir="up" size={8} color="#444" /></div>
        <div className="h-[195px] bg-[#e0e0e0]" />
        <div className="h-[230px]" />
        <div className="h-[55px] bg-[#e0e0e0]" />
        <div className="flex-1 bg-white flex items-center justify-center"><Tri size={8} color="#444" /></div>
      </div>
    </div>
    <div className="mt-[16px] flex justify-end gap-[8px] pr-[15px]">
      <QButton primary>OK</QButton>
      <QButton>Cancel</QButton>
      <QButton>Help</QButton>
    </div>
  </div>
);

const Grip = () => (
  <span className="w-[5px] h-[24px] mx-[6px] shrink-0 border-x border-dotted border-[#bbb]" />
);

export default function App() {
  const menu = ["Project", "Edit", "View", "Layer", "Settings", "Plugins", "Vector", "Raster", "Web"];
  return (
    <div className="relative w-[1919px] h-[990px] overflow-hidden bg-[#f0f0f0] font-['Noto_Sans',sans-serif]">
      <div className="h-[990px] flex flex-col">
        <div className="h-[28px] shrink-0 bg-[#f2f2f2] flex items-center pl-[2px] text-[14.5px] text-[#8a8a8a]">
          <Logo />
          <span className="ml-[6px] flex-1">*NRW_Prec — QGIS</span>
          <Minus size={16} strokeWidth={1} color="#666" className="mr-[44px]" />
          <svg width="12" height="13" viewBox="0 0 12 13" className="mr-[46px]"><rect x="1" y="3" width="8" height="9" rx="1.5" fill="none" stroke="#666" /><path d="M3 1h6a2 2 0 0 1 2 2v7" fill="none" stroke="#666" /></svg>
          <X size={17} strokeWidth={1} color="#666" className="mr-[22px]" />
        </div>
        <div className="h-[26px] shrink-0 bg-[#f0f0f0] border-b-2 border-[#d6d6d6] flex items-center pl-[13px] gap-[18px] text-[14px] text-[#a0a0a0]">
          {menu.map((m) => (
            <span key={m}>{m}</span>
          ))}
        </div>
        <div className="h-[49px] shrink-0 border-b border-[#c8c8c8] flex items-center pt-[1px]">
          <Grip />
          <div className="flex items-center -ml-[2px]">
            {toolbar1.map((t, i) => (
              <span key={i} className="w-[41px] flex justify-center">{t}</span>
            ))}
          </div>
          <span className="ml-[2px]"><Grip /></span>
          <span className="w-[39px] h-[38px] ml-[6px] rounded-[3px] bg-[#e2e2e2] border border-[#b4b4b4] flex items-center justify-center">
            <Hand size={27} fill="#fff" color="#111" strokeWidth={1.5} />
          </span>
          <span className="w-[43px] flex justify-center"><Pan /></span>
          <span className="w-[42px] flex justify-center"><Magnifier sign="+" /></span>
          <span className="w-[41px] flex justify-center"><Magnifier sign="-" /></span>
          <span className="w-[41px] flex justify-center"><ZoomFull /></span>
        </div>
        <div className="h-[48px] shrink-0 border-b border-[#c8c8c8] flex items-center pt-[2px]">
          <Grip />
          <div className="flex items-center -ml-[1px]">
            {toolbar2.map((t, i) => (
              <span key={i} className="w-[41px] flex justify-center">{t}</span>
            ))}
          </div>
          <Grip />
          <div className="flex items-center ml-[6px]">
            {toolbar2b.map((t, i) => (
              <span key={i} className="w-[41px] flex justify-center">{t}</span>
            ))}
          </div>
          <span className="ml-[2px]"><Tri size={9} color="#999" /></span>
        </div>
        <div className="h-[21px] shrink-0 border-b-2 border-[#c8c8c8] flex items-center">
          <Grip />
        </div>
        <div className="flex-1 flex min-h-0">
          <LayersPanel />
          <div className="w-[9px] shrink-0 flex items-center justify-center">
            <span className="w-[3px] h-[20px] border-l border-dotted border-[#bbb]" />
          </div>
          <MapCanvas />
        </div>
        <div className="h-[5px] shrink-0 border-t border-[#bcbcbc] bg-[#efefef]" />
      </div>
      <LayerProperties />
      <SymbolSettings />
      <div className="absolute left-[739px] top-[632px] w-[351px] h-[26px] bg-[#ffffe1] border border-black shadow-[2px_2px_3px_rgba(0,0,0,0.3)] flex items-center pl-[4px] text-[14px] text-[#111] whitespace-nowrap">
        C:/PROGRA~1/QGIS33~1.0/apps/qgis/./svg//health
      </div>
    </div>
  );
}
